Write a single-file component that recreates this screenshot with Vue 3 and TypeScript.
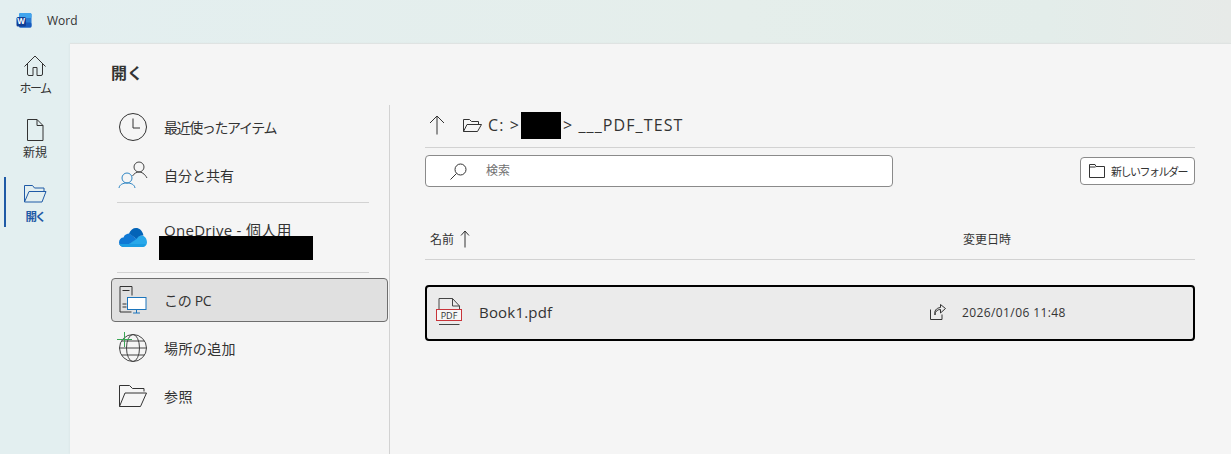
<script setup lang="ts">
</script>

<template>
  <div class="app">
    <header class="titlebar">
      <svg class="logo" width="16" height="16" viewBox="0 0 16 16">
        <rect x="3" y="1" width="12.500" height="14.500" rx="1.500" fill="#2b7cd3" />
        <rect x="3" y="1" width="12.500" height="5" rx="1.500" fill="#41a5ee" />
        <rect x="3" y="10.500" width="12.500" height="5" rx="1.500" fill="#185abd" />
        <rect x="0.500" y="5" width="9.500" height="9.500" rx="1.500" fill="#123f96" />
        <text x="5.200" y="12.300" text-anchor="middle" class="logo-w">W</text>
      </svg>
      <span class="app-name">Word</span>
    </header>
    <div class="body">
      <nav class="rail">
        <a class="rail-item">
          <svg width="24" height="24" viewBox="0 0 24 24" fill="none" stroke="#333" stroke-width="1">
            <path d="M1.500 12.500 12 2l10.500 10.500M4.500 10v10a1.500 1.500 0 0 0 1.500 1.500h4v-8h4v8h4a1.500 1.500 0 0 0 1.500-1.500V10" />
          </svg>
          <span class="home-label">ホーム</span>
        </a>
        <a class="rail-item">
          <svg width="24" height="24" viewBox="0 0 24 24" fill="none" stroke="#333" stroke-width="1">
            <path d="M4.500 1.500h9.500l6 6v15h-15.500zM14 1.500v6h6" />
          </svg>
          <span>新規</span>
        </a>
        <a class="rail-item active">
          <svg width="24" height="24" viewBox="0 0 24 24" fill="none" stroke="#1f5aa6" stroke-width="1">
            <path d="M1.500 20V3.500h8l2 2.500h9.500v3M1.500 20h17.500l4-10.500H6z" />
          </svg>
          <span class="open-label">開く</span>
        </a>
      </nav>
      <main class="main">
        <h1>開く</h1>
        <div class="columns">
          <section class="places">
            <a class="place">
              <svg class="place-icon" viewBox="0 0 30 30" fill="none" stroke="#333" stroke-width="1">
                <circle cx="15" cy="15" r="13.500" />
                <path d="M15 6.500V16h7" />
              </svg>
              <span class="tight">最近使ったアイテム</span>
            </a>
            <a class="place">
              <svg class="place-icon" viewBox="0 0 30 30" fill="none" stroke-width="1">
                <g stroke="#444">
                  <circle cx="21" cy="7" r="5" />
                  <path d="M14.500 16c1.500-2.500 4-4 6.500-4s5.500 1.500 8 6" />
                </g>
                <g stroke="#2f86c4">
                  <circle cx="9" cy="18" r="5" />
                  <path d="M1 28c.5-3.500 4-5 8-5s7.500 1.500 8 5" />
                </g>
              </svg>
              <span>自分と共有</span>
            </a>
            <hr class="place-rule" />
            <a class="place onedrive">
              <svg class="place-icon" viewBox="0 0 30 30">
                <path d="M7 25h17.500c2.500 0 4.500-2 4.500-4.500 0-4-2.500-7-5.500-7-2.500 0-4 1-5.500 3z" fill="#28a8ea" />
                <path d="M1 20.500c0-3 2-5 4.500-5 1-3 3.500-4 6-4l7 5.500-11.500 8H6c-3 0-5-2-5-4.500z" fill="#0f78d4" />
                <path d="M11 11.500C12.500 8 15 6 18 6c3.500 0 6 2 7.500 7.500-3-.5-5 .5-7 3.500z" fill="#0364b8" />
                <path d="M6 25c-2.500 0-4.200-1.500-4.800-3h26.600c-.7 2-2 3-3.300 3z" fill="#1b9de2" />
              </svg>
              <span class="onedrive-label">OneDrive - 個人用</span>
              <i class="redact account"></i>
            </a>
            <hr class="place-rule" />
            <a class="place selected">
              <svg class="place-icon" viewBox="0 0 30 30" fill="none" stroke-width="1">
                <path d="M13.500 27H2V1.500h12v9M4.500 5.500h7M4.500 19h4M4.500 22h4" stroke="#333" />
                <rect x="9.500" y="12.500" width="18.500" height="12" fill="#fff" stroke="#1c75bc" />
                <path d="M18.500 25v3M15 28h7" stroke="#1c75bc" />
              </svg>
              <span class="pc-label">この PC</span>
            </a>
            <a class="place">
              <svg class="place-icon" viewBox="0 0 30 30" fill="none" stroke-width="1">
                <g stroke="#444">
                  <circle cx="15" cy="15" r="13.500" />
                  <ellipse cx="15" cy="15" rx="6.500" ry="13.500" />
                  <path d="M1.500 15h27M3.500 8h23M3.500 22h23" />
                </g>
                <path d="M6.500 -1v15M-1 6.500h15" stroke="#3aa655" />
              </svg>
              <span class="wide">場所の追加</span>
            </a>
            <a class="place">
              <svg class="place-icon" viewBox="0 0 30 30" fill="none" stroke="#333" stroke-width="1">
                <path d="M1.500 25.500V4.500h10l3 3h11.500v3M1.500 25.500h21l6-13.500H7z" />
              </svg>
              <span class="wide">参照</span>
            </a>
          </section>
          <section class="files">
            <div class="crumbs">
              <svg width="16" height="20" viewBox="0 0 16 20" fill="none" stroke="#333" stroke-width="1">
                <path d="M8 19.500V1M1 8l7-7 7 7" />
              </svg>
              <svg class="crumb-folder" width="19" height="15" viewBox="0 0 19 15" fill="none" stroke="#333" stroke-width="1">
                <path d="M.5 13.500V1.500h6l2 2h7v3M.5 13.500h14l4-7H4z" />
              </svg>
              <span class="crumb-text">C: &gt;</span>
              <i class="redact crumb-box"></i>
              <span class="crumb-text">&gt; ___PDF_TEST</span>
            </div>
            <div class="tools">
              <div class="search">
                <svg width="17" height="17" viewBox="0 0 17 17" fill="none" stroke="#333" stroke-width="1">
                  <circle cx="10.500" cy="6.500" r="5.500" />
                  <path d="M6.500 10.500 .5 16.500" />
                </svg>
                <span class="search-hint">検索</span>
              </div>
              <button class="new-folder">
                <svg width="16" height="14" viewBox="0 0 16 14" fill="none" stroke="#333" stroke-width="1">
                  <path d="M.5 13.500V.5h5.500l1 2h8.500v11zM.5 3h6" />
                </svg>
                <span>新しいフォルダー</span>
              </button>
            </div>
            <div class="list-head">
              <span class="col-name">名前
                <svg width="10" height="18" viewBox="0 0 10 18" fill="none" stroke="#333" stroke-width="1">
                  <path d="M5 17.500V1M1 5.500 5 1l4 4.500" />
                </svg>
              </span>
              <span class="col-date">変更日時</span>
            </div>
            <div class="file-row">
              <svg class="pdf-icon" width="30" height="30" viewBox="0 0 30 30" fill="none">
                <path d="M4 12V1.500h13.500L24.500 9v3" stroke="#444" />
                <path d="M17.500 1.500V9h7" stroke="#444" />
                <path d="M4 27.500h20.500" stroke="#444" />
                <rect x="1.500" y="12.500" width="25" height="11" fill="#f7f7f7" stroke="#c8343a" />
                <text x="14" y="21.500" text-anchor="middle" class="pdf-label">PDF</text>
              </svg>
              <span class="file-name">Book1.pdf</span>
              <svg class="share" width="16" height="16" viewBox="0 0 16 16" fill="none" stroke="#333" stroke-width="1">
                <path d="M.5 5.500v10h11.500v-5M5 11c0-3.500 2-5.500 5.500-5.500V9L15.500 4.500 10.500 .5v3C6 4 4 7 5 11z" />
              </svg>
              <span class="file-date">2026/01/06 11:48</span>
            </div>
          </section>
        </div>
      </main>
    </div>
  </div>
</template>

<style>
html, body { margin: 0; overflow: hidden; }
</style>

<style scoped>
.app {
  width: 1231px;
  height: 454px;
  display: flex;
  flex-direction: column;
  background: #e3eff0;
  color: #333;
  font-family: "Open Sans", "Noto Sans CJK JP", sans-serif;
  font-size: 14px;
  overflow: hidden;
}

.titlebar {
  height: 43px;
  flex: none;
  display: flex;
  align-items: center;
  padding: 0 0 3px 16px;
  box-sizing: border-box;
  gap: 15px;
  background: linear-gradient(90deg, #e3eff0, #e5eeeb 60%, #e3edea 85%, #e7eae8);
}

.logo-w {
  font-size: 8px;
  font-weight: 700;
  fill: #fff;
}

.app-name {
  font-size: 12px;
}

.body {
  flex: 1;
  display: flex;
  min-height: 0;
}

.rail {
  width: 70px;
  flex: none;
  display: flex;
  flex-direction: column;
  padding-top: 11px;
  box-sizing: border-box;
}

.rail-item {
  height: 64px;
  display: flex;
  flex-direction: column;
  align-items: center;
  position: relative;
  font-size: 12px;
  gap: 3px;
  line-height: 16px;
}

.home-label {
  letter-spacing: -1.500px;
}

.open-label {
  letter-spacing: -2px;
  font-size: 11.500px;
}

.rail-item.active {
  color: #1f5aa6;
  font-weight: 700;
}

.rail-item.active::before {
  content: "";
  position: absolute;
  left: 4px;
  top: -5px;
  width: 2px;
  height: 50px;
  background: #1f5aa6;
}

.main {
  flex: 1;
  background: #f5f5f5;
  border-top: 1px solid #dfe3e2;
  box-shadow: -1px 0 2px rgba(0, 0, 0, 0.03);
  display: flex;
  flex-direction: column;
  min-width: 0;
}

h1 {
  margin: 0;
  padding: 17px 0 0 41px;
  font-size: 16px;
  line-height: 24px;
  font-weight: 700;
  height: 61px;
  box-sizing: border-box;
}

.columns {
  flex: 1;
  display: flex;
  min-height: 0;
}

.places {
  width: 320px;
  flex: none;
  box-sizing: border-box;
  padding: 0 1px 0 41px;
  border-right: 1px solid #d2d2d2;
  display: flex;
  flex-direction: column;
}

.place {
  height: 44px;
  margin-bottom: 4px;
  flex: none;
  display: flex;
  align-items: center;
  gap: 16px;
  padding-left: 7px;
  box-sizing: border-box;
  position: relative;
}

.tight {
  letter-spacing: -1.400px;
}

.wide {
  letter-spacing: 0.400px;
}

.pc-label {
  letter-spacing: -0.300px;
}

.place-icon {
  width: 30px;
  height: 30px;
  flex: none;
  overflow: visible;
}

.place-rule {
  border: none;
  border-top: 1px solid #d2d2d2;
  margin: 1px 19px 0 6px;
  height: 0;
  flex: none;
}

.onedrive {
  height: 68px;
  margin-bottom: 0;
}

.onedrive-label {
  margin-top: -15px;
  font-size: 15px;
  letter-spacing: 0.300px;
}

.redact {
  display: block;
  background: #000;
}

.account {
  position: absolute;
  left: 48px;
  top: 33px;
  width: 154px;
  height: 24px;
}

.selected {
  margin-top: 5px;
  background: #e0e0e0;
  border: 1px solid #6e6e6e;
  border-radius: 4px;
  padding-left: 6px;
}

.files {
  flex: 1;
  min-width: 0;
  padding: 0 36px 0 35px;
  display: flex;
  flex-direction: column;
}

.crumbs {
  height: 43px;
  flex: none;
  display: flex;
  align-items: center;
  border-bottom: 1px solid #d2d2d2;
  padding-left: 4px;
  padding-bottom: 2px;
  font-size: 16px;
  box-sizing: border-box;
}

.crumb-folder {
  margin-left: 18px;
  margin-right: 6px;
}

.crumb-text {
  white-space: pre;
  letter-spacing: 1.100px;
}

.crumb-box {
  width: 40px;
  height: 27px;
  margin: 0 2px 0 1px;
}

.tools {
  display: flex;
  justify-content: space-between;
  align-items: center;
  margin-top: 7px;
  height: 32px;
  flex: none;
}

.search {
  width: 468px;
  height: 32px;
  box-sizing: border-box;
  background: #fff;
  border: 1px solid #8a8a8a;
  border-radius: 4px;
  display: flex;
  align-items: center;
  gap: 19px;
  padding-left: 24px;
  font-size: 12px;
  color: #707070;
}

.search-hint {
  margin-top: -2px;
}

.new-folder {
  width: 115px;
  height: 28px;
  box-sizing: border-box;
  background: #fff;
  border: 1px solid #8a8a8a;
  border-radius: 4px;
  display: flex;
  align-items: center;
  gap: 6px;
  padding: 0 0 0 8px;
  font: inherit;
  font-size: 11px;
  letter-spacing: -1.500px;
  color: inherit;
}

.list-head {
  margin-top: 31px;
  height: 42px;
  flex: none;
  border-bottom: 1px solid #d2d2d2;
  display: flex;
  align-items: center;
  justify-content: space-between;
  box-sizing: border-box;
  font-size: 12px;
}

.col-name {
  padding-left: 5px;
  display: flex;
  align-items: center;
  gap: 6px;
}

.col-date {
  width: 232px;
}

.file-row {
  margin-top: 25px;
  height: 56px;
  flex: none;
  box-sizing: border-box;
  border: 2px solid #000;
  border-radius: 4px;
  background: #ebebeb;
  display: flex;
  align-items: center;
  padding-left: 8px;
}

.pdf-icon {
  margin-top: -2px;
}

.pdf-label {
  font-size: 9px;
  fill: #333;
  font-family: "Open Sans", sans-serif;
}

.file-name {
  margin: -2px 0 0 14px;
  font-size: 15px;
  letter-spacing: 0.200px;
  flex: 1;
}

.share {
  margin: -2px 16px 0 0;
}

.file-date {
  margin-top: -2px;
  font-size: 12px;
  letter-spacing: 0.400px;
  width: 231px;
}
</style>
